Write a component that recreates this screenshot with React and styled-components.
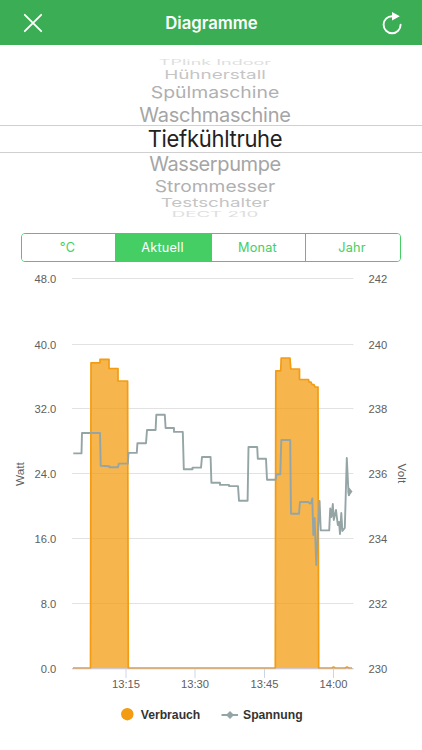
import React, { useState } from 'react';
import styled, { createGlobalStyle } from 'styled-components';

const GlobalStyle = createGlobalStyle`
  * {
    box-sizing: border-box;
  }

  body {
    margin: 0;
    background: #fff;
    font-family: Inter, "Liberation Sans", sans-serif;
  }
`;

const Screen = styled.div`
  width: 422px;
  height: 750px;
  overflow: hidden;
  background: #fff;
`;

const Header = styled.header`
  display: flex;
  align-items: center;
  justify-content: space-between;
  height: 45px;
  padding: 0 19px 0 22px;
  background: #3bae55;
  color: #fff;
`;

const Title = styled.h1`
  margin: 0;
  padding-right: 2px;
  font-size: 16.7px;
  font-weight: 600;
  line-height: 20px;
`;

const IconButton = styled.button`
  display: flex;
  padding: 0;
  border: 0;
  background: none;
  color: inherit;
`;

const Picker = styled.div`
  display: flex;
  flex-direction: column;
  height: 180px;
  padding-top: 12px;
`;

const PickerRow = styled.div`
  display: flex;
  flex-shrink: 0;
  align-items: center;
  justify-content: center;
  height: ${(props) => props.$height}px;
  padding-left: 8px;
  color: ${(props) => props.$color};
  border: solid #d0d0d0;
  border-width: ${(props) => (props.$selected ? '1px 0' : '0')};
`;

const PickerLabel = styled.span`
  font-size: ${(props) => props.$size}px;
  letter-spacing: ${(props) => props.$spacing || 0}px;
  line-height: 10px;
  white-space: nowrap;
  transform: scaleY(${(props) => props.$squash});
`;

const Segments = styled.div`
  display: grid;
  grid-template-columns: 93px 96px 94px 95px;
  width: 380px;
  height: 29px;
  margin: 8px 0 3px 21px;
  border: 1px solid #45ce63;
  border-radius: 4px;
  overflow: hidden;
`;

const Segment = styled.button`
  padding: 0 2px 0 0;
  border: 0;
  border-left: ${(props) => (props.$first ? '0' : '1px solid #45ce63')};
  background: ${(props) => (props.$active ? '#45ce63' : '#fff')};
  color: ${(props) => (props.$active ? '#fff' : '#45ce63')};
  font-family: inherit;
  font-size: 12.7px;
  letter-spacing: 0.2px;
`;

const Chart = styled.svg`
  display: block;
  font-family: "Liberation Sans", Arial, sans-serif;
  font-size: 11.2px;
  fill: #606060;
`;

const AxisTitle = styled.text`
  font-size: 11.8px;
`;

const LegendLabel = styled.text`
  font-size: 12.2px;
  font-weight: bold;
  fill: #333;
`;

const devices = [
  { name: 'TPlink Indoor', height: 12, size: 18, squash: 0.4, color: '#dedede' },
  { name: 'Hühnerstall', height: 11.5, size: 18.9, squash: 0.64, color: '#c5c5c5' },
  { name: 'Spülmaschine', height: 23.5, size: 19.4, squash: 0.85, color: '#b0b0b0' },
  { name: 'Waschmaschine', height: 21, size: 20, squash: 0.97, color: '#a5a5a5', spacing: -0.25 },
  { name: 'Tiefkühltruhe', height: 28, size: 22, squash: 1.03, color: '#222', spacing: -0.3, selected: true },
  { name: 'Wasserpumpe', height: 21.5, size: 20, squash: 0.97, color: '#a5a5a5', spacing: -0.4 },
  { name: 'Strommesser', height: 22, size: 19.2, squash: 0.85, color: '#b0b0b0' },
  { name: 'Testschalter', height: 13, size: 18.8, squash: 0.64, color: '#c5c5c5' },
  { name: 'DECT 210', height: 10, size: 18.7, squash: 0.38, color: '#dedede' },
];

const tabs = ['°C', 'Aktuell', 'Monat', 'Jahr'];

const gridRows = [
  { y: 279, watt: '48.0', volt: '242' },
  { y: 345, watt: '40.0', volt: '240' },
  { y: 409, watt: '32.0', volt: '238' },
  { y: 474, watt: '24.0', volt: '236' },
  { y: 539, watt: '16.0', volt: '234' },
  { y: 604, watt: '8.0', volt: '232' },
  { y: 669, watt: '0.0', volt: '230' },
];

const timeTicks = [
  { x: 126, label: '13:15' },
  { x: 195, label: '13:30' },
  { x: 264.5, label: '13:45' },
  { x: 333.5, label: '14:00' },
];

const usagePath =
  'M73 668H90.5L91 362.8H100V359.3H109V368.5H118V381H127.6L128.3 668H275.3L275.8 370.8H280.7L281.2 358H290L290.8 369H299.5V379.5H308.5L309 382H311L312 384.5H314L315 387H318L318.7 668H332L333.5 667L335 668H345L347 667L349 668H352';

const voltagePath =
  'M73.3 453.4H81.5L82 433H100L100.7 465.8L109.3 466.2V467.3H118L118.8 463.6H127.8L128.5 452.9H136.8L137.4 443.3H146L147 430H155.6L156.3 414.7H164.8L165.6 428H174V431.9H182.8L183.8 469.3H192.5V467.6H201L202 457H210.6L211.4 482.7H220V484.9H229V486.1H238L239 500.7H247.6L248.5 447H257.2L257.8 458.7H266L267 479.8H275.5L276.5 474.2H280.3L281.3 440H290.2L291 513.7H299L300 502H308.4L309.5 503.5L311 503L312.3 498.5L313.3 535L314.6 518L316.3 565L318 530L319.6 501L320.7 530.4H329.2L330.2 508.5L331.5 517L332.8 504L333.8 520L336 510L337.8 525L339 522L340 534L341.3 513L342.4 531L344.8 528L346.8 458L348.5 493L349 496';

const VoltChart = () => (
  <Chart width="422" height="485" viewBox="0 265 422 485">
    {gridRows.map((row) => (
      <g key={row.volt}>
        <path d={`M72 ${row.y - 0.5}H353.5`} stroke="#e2e2e2" />
        <text x="56.3" y={row.y + 4.3} textAnchor="end">{row.watt}</text>
        <text x="368.5" y={row.y + 4.3}>{row.volt}</text>
      </g>
    ))}

    <path d={usagePath} fill="#f39c12" fillOpacity="0.75" stroke="#f39c12" strokeWidth="1.7" strokeLinejoin="round" />
    <path d="M72 668.8H353.5" stroke="#c0b0bc" strokeWidth="0.7" />

    {timeTicks.map((tick) => (
      <g key={tick.label}>
        <path d={`M${tick.x} 669V678`} stroke="#ccd6eb" />
        <text x={tick.x} y="688" textAnchor="middle">{tick.label}</text>
      </g>
    ))}

    <path d={voltagePath} fill="none" stroke="#95a5a6" strokeWidth="1.9" strokeLinejoin="round" />
    <path d="M349.2 487.5L352.5 491.5L349.2 496L347.5 491.5Z" fill="#95a5a6" />

    <AxisTitle transform="translate(24 486) rotate(-90)">Watt</AxisTitle>
    <AxisTitle transform="translate(398 463.5) rotate(90)">Volt</AxisTitle>

    <circle cx="127.3" cy="714.2" r="6.2" fill="#f39c12" />
    <LegendLabel x="140.7" y="719">Verbrauch</LegendLabel>
    <path d="M221.5 715H238" stroke="#95a5a6" strokeWidth="2" />
    <path d="M230 711L234 715L230 719L226 715Z" fill="#95a5a6" />
    <LegendLabel x="243" y="719">Spannung</LegendLabel>
  </Chart>
);

const App = () => {
  const [activeTab, setActiveTab] = useState('Aktuell');

  return (
    <>
      <GlobalStyle />
      <Screen>
        <Header>
          <IconButton aria-label="Schließen">
            <svg width="22" height="22" viewBox="0 0 22 22" fill="none" stroke="#fff" strokeWidth="1.8" strokeLinecap="round">
              <path d="M2.8 2.8L19.2 19.2M19.2 2.8L2.8 19.2" />
            </svg>
          </IconButton>
          <Title>Diagramme</Title>
          <IconButton aria-label="Aktualisieren">
            <svg width="22" height="24" viewBox="0 0 22 24" fill="none" stroke="#fff" strokeWidth="1.9" strokeLinecap="round">
              <path d="M19.6 13.7A8.5 8.5 0 1 1 11.1 5.2" />
              <path d="M11 1L18.8 5.2L11 9.6Z" fill="#fff" stroke="none" />
            </svg>
          </IconButton>
        </Header>

        <Picker>
          {devices.map((device) => (
            <PickerRow key={device.name} $height={device.height} $color={device.color} $selected={device.selected}>
              <PickerLabel $size={device.size} $squash={device.squash} $spacing={device.spacing}>
                {device.name}
              </PickerLabel>
            </PickerRow>
          ))}
        </Picker>

        <Segments>
          {tabs.map((tab, index) => (
            <Segment key={tab} $first={index === 0} $active={tab === activeTab} onClick={() => setActiveTab(tab)}>
              {tab}
            </Segment>
          ))}
        </Segments>

        <VoltChart />
      </Screen>
    </>
  );
};

export default App;
